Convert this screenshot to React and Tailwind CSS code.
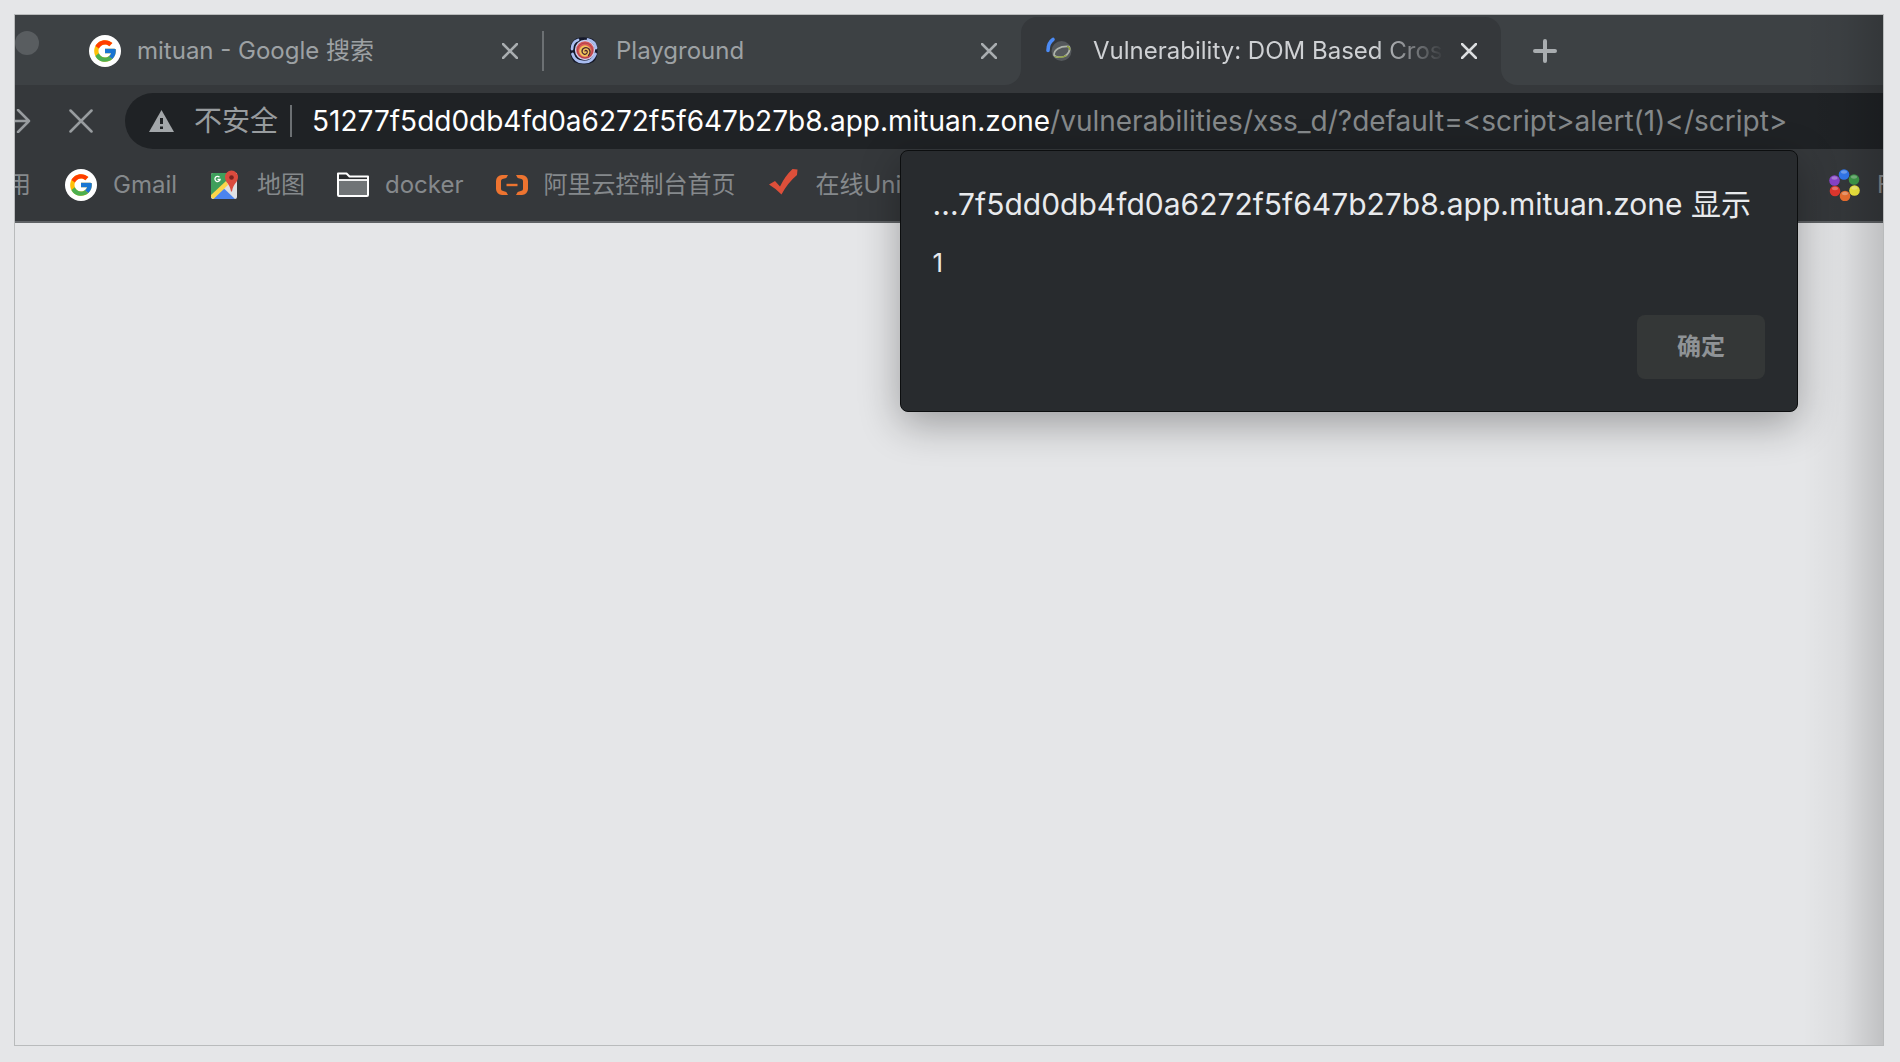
import { FcGoogle } from "react-icons/fc";

function GoogleBadge() {
  return (
    <span className="flex size-8 shrink-0 items-center justify-center rounded-full bg-white">
      <FcGoogle size={26} aria-hidden="true" />
    </span>
  );
}

function Cross({ size, width }) {
  return (
    <svg width={size} height={size} viewBox="0 0 16 16" fill="none" stroke="currentColor" strokeWidth={width} strokeLinecap="round" aria-hidden="true">
      <path d="M1 1 15 15M15 1 1 15" />
    </svg>
  );
}

function SpiralIcon() {
  return (
    <svg className="size-8 shrink-0" viewBox="0 0 32 32" fill="none" aria-hidden="true">
      <path d="M8 3.500Q16 1 25 4 30 9 29.500 17 29 27 22 28.500 14 30.500 6 27 1.500 21 2 14 2.500 7 8 3.500Z" fill="#15192b" />
      <path d="M4 14Q4 7 10 5M4.500 19Q7 27 15 27Q24 28 27.500 19M20 4.500Q27 6 28 13" stroke="#a9bdf0" strokeWidth="2.800" strokeLinecap="round" />
      <circle cx="17" cy="15" r="9.500" fill="#d95a58" stroke="#c9cdf0" strokeWidth="1.300" />
      <circle cx="17" cy="15.500" r="7.500" stroke="#a33a45" strokeWidth="0.800" />
      <circle cx="17" cy="16" r="5.800" fill="#f2c35a" />
      <path d="M17 16c1-1.500 3 0 2 2-1.500 2.300-5 1.300-5-1.700 0-3.500 4.500-5 7-2.300 1.500 2 1.200 4.500-.5 6.500" stroke="#4a2430" strokeWidth="1.300" strokeLinecap="round" />
    </svg>
  );
}

function LoadingIcon() {
  return (
    <svg className="size-8 shrink-0" viewBox="0 0 32 32" fill="none" aria-hidden="true">
      <path d="M3 15.500C3 10.500 5 6.500 8 4.500" stroke="#4c8bf5" strokeWidth="3.600" strokeLinecap="round" />
      <circle cx="16.500" cy="16" r="10" fill="#54585b" />
      <path d="M9 20C9 15 14 11 24 11.500C26 15 23 20 19 21.500C14 22.500 10 22 9 20Z" stroke="#aeb3ab" strokeWidth="1.700" />
      <path d="M9.500 21.500Q16 23.500 21.500 20.500M22 11.500Q25.500 12 24.500 15" stroke="#8fa23c" strokeWidth="1.300" />
    </svg>
  );
}

function MapsIcon() {
  return (
    <svg className="size-8 shrink-0" viewBox="0 0 32 32" fill="none" aria-hidden="true">
      <path d="M4 4h24v24a2 2 0 0 1-2 2H4a2 2 0 0 1-2-2V6a2 2 0 0 1 2-2Z" fill="#dfe1e4" />
      <path d="M4 4h16l-3 10L2 28V6a2 2 0 0 1 2-2Z" fill="#3f9f5b" />
      <path d="M4 30 15 19.500 26 30Z" fill="#4c84ee" />
      <path d="m2 26 15-14 2 4L4.500 30 2 28Z" fill="#fbd54a" />
      <path d="M22.500 1.500a6.500 6.500 0 0 1 6.500 6.600c0 5.500-4.700 6.500-6 14.400h-1c-1.300-7.900-6-8.900-6-14.400a6.500 6.500 0 0 1 6.500-6.600Z" fill="#dc4b3e" />
      <circle cx="22.500" cy="8.500" r="2.300" fill="#7b231f" />
      <path d="M10.500 8.200a2.600 2.600 0 1 0 .6 2.300H8.500" stroke="#fff" strokeWidth="1.300" />
    </svg>
  );
}

function FolderIcon() {
  return (
    <svg className="size-8 shrink-0" viewBox="0 0 32 32" fill="none" aria-hidden="true">
      <path d="M1 26V4.500h8.500l3 3H31V26a1 1 0 0 1-1 1H2a1 1 0 0 1-1-1Z" fill="#2a2c2e" stroke="#fff" strokeWidth="2" strokeLinejoin="round" />
      <path d="M2 11h28v15H2Z" fill="#707476" />
      <path d="M1 11h30" stroke="#fff" strokeWidth="1.800" />
    </svg>
  );
}

function AliyunIcon() {
  return (
    <svg className="size-8 shrink-0" viewBox="0 0 32 32" fill="none" aria-hidden="true">
      <path d="M12 6H6a6 6 0 0 0-6 6v8a6 6 0 0 0 6 6h6l-1.700-3-3.800-1.200A2 2 0 0 1 5 20v-8a2 2 0 0 1 1.500-1.900L10.300 9ZM20 6h6a6 6 0 0 1 6 6v8a6 6 0 0 1-6 6h-6l1.700-3 3.800-1.200A2 2 0 0 0 27 20v-8a2 2 0 0 0-1.500-1.900L21.700 9Z" fill="#ee7430" />
      <path d="M10.500 14.800h11v2.400h-11Z" fill="#ee7430" />
    </svg>
  );
}

function CheckIcon() {
  return (
    <svg className="size-8 shrink-0" viewBox="0 0 32 32" aria-hidden="true">
      <path d="M1 15.500 7 12 12 17.500Q17 7 24.500 0L29.500 .5 29 6Q19.500 14 13.500 25.500Q7 19 1 15.500Z" fill="#dd4f3a" />
    </svg>
  );
}

function BeadsIcon() {
  const beads = [
    [15, 5.500, "#3178ee"],
    [25, 10.500, "#3f9a4a"],
    [25.500, 21.500, "#f3ea3e"],
    [16, 27, "#ec7030"],
    [6, 22, "#e4382f"],
    [5.500, 11.500, "#8a44cc"],
  ];
  return (
    <svg className="size-8 shrink-0" viewBox="0 0 32 32" aria-hidden="true">
      {beads.map(([x, y, color]) => (
        <g key={color}>
          <circle cx={x} cy={y} r="5.300" fill={color} />
          <ellipse cx={x} cy={y - 2.500} rx="3" ry="1.700" fill="#fff" opacity="0.300" />
        </g>
      ))}
    </svg>
  );
}

function Tab({ icon, title, active }) {
  return (
    <div className={active ? "flex h-full min-w-0 flex-1 items-center rounded-t-2xl bg-[#35383b] px-6 text-[#cfd1d4]" : "flex h-full min-w-0 flex-1 items-center px-6 text-[#9da1a4]"}>
      {icon}
      <span className={active ? "ml-4 flex-1 overflow-hidden mask-r-from-80% whitespace-nowrap" : "ml-4 flex-1 overflow-hidden whitespace-nowrap"}>{title}</span>
      <button type="button" aria-label={"关闭 " + title} className={active ? "ml-4 text-[#dcdee0]" : "ml-4 text-[#a9adb0]"}>
        <Cross size={16} width={2.5} />
      </button>
    </div>
  );
}

function Bookmark({ icon, children }) {
  return (
    <a href="#" className="flex shrink-0 items-center gap-4 whitespace-nowrap">
      {icon}
      <span>{children}</span>
    </a>
  );
}

function AlertDialog() {
  return (
    <div role="alertdialog" aria-labelledby="alert-title" aria-describedby="alert-message" className="absolute top-[135px] right-[85px] flex flex-col rounded-lg border border-[#0c0e0f] bg-[#282b2e] p-8 text-[#e8eaed] shadow-[0_12px_40px_rgba(0,0,0,0.32)]">
      <h1 id="alert-title" className="mr-[14px] text-[30px] leading-[42px] whitespace-nowrap">...7f5dd0db4fd0a6272f5f647b27b8.app.mituan.zone 显示</h1>
      <p id="alert-message" className="mt-5 text-[26px] leading-9">1</p>
      <button type="button" className="mt-[34px] flex h-16 w-32 items-center justify-center self-end rounded-lg bg-[#343737] text-2xl font-bold text-[#8f9396]">确定</button>
    </div>
  );
}

export default function App() {
  return (
    <div className="flex min-h-screen bg-[#e5e6e8] pt-[14px] pr-4 pb-4 pl-[14px] font-['Inter','Noto_Sans_CJK_SC',sans-serif]">
      <div className="relative flex min-w-0 flex-1 flex-col overflow-hidden border border-[#b9bbbc]">
        <header className="bg-[#35383b]">
          <div className="flex h-[70px] text-2xl">
            <div className="flex min-w-0 basis-[1006px] items-center rounded-br-2xl bg-[#3d4144] pt-0.5">
              <span className="mb-4 size-6 shrink-0 rounded-full bg-[#595d60]" />
              <div className="ml-[26px] flex h-full min-w-0 flex-1 items-center">
                <Tab icon={<GoogleBadge />} title="mituan - Google 搜索" />
                <span className="h-10 w-0.5 bg-[#6c7073]" />
                <Tab icon={<SpiralIcon />} title="Playground" />
              </div>
            </div>
            <div className="flex min-w-0 basis-[480px] bg-[#3d4144] pt-0.5">
              <Tab active icon={<LoadingIcon />} title="Vulnerability: DOM Based Cross Site Scripting" />
            </div>
            <div className="flex flex-1 items-center rounded-bl-2xl bg-[#3d4144] pt-0.5 pl-8">
              <button type="button" aria-label="新标签页" className="text-[#a9adb0]">
                <svg className="size-6" viewBox="0 0 24 24" stroke="currentColor" strokeWidth="4" strokeLinecap="round" aria-hidden="true">
                  <path d="M12 2v20M2 12h20" />
                </svg>
              </button>
            </div>
          </div>

          <div className="flex items-center pt-2 text-[#989c9f]">
            <button type="button" aria-label="前进" className="flex w-4 justify-end overflow-hidden">
              <svg className="h-6 w-7 shrink-0" viewBox="0 0 28 24" fill="none" stroke="currentColor" strokeWidth="2.500" strokeLinecap="round" strokeLinejoin="round" aria-hidden="true">
                <path d="M2 12h24M15 1l11 11-11 11" />
              </svg>
            </button>
            <button type="button" aria-label="停止加载" className="ml-[38px]">
              <Cross size={24} width={1.7} />
            </button>
            <div className="ml-8 flex h-14 min-w-0 flex-1 items-center rounded-l-full bg-[#1f2225] pl-6 text-[28px]">
              <svg className="h-[22px] w-[25px] shrink-0" viewBox="0 0 25 22" aria-hidden="true">
                <path d="M12.500 0 25 22H0Z" fill="#a3a7aa" />
                <path d="M11 8h3v6h-3ZM11 16.500h3v2.500h-3Z" fill="#1f2225" />
              </svg>
              <button type="button" className="ml-5 shrink-0">不安全</button>
              <span className="ml-3 h-8 w-0.5 shrink-0 bg-[#6c7073]" />
              <label htmlFor="address" className="ml-5 shrink-0 text-white">51277f5dd0db4fd0a6272f5f647b27b8.app.mituan.zone</label>
              <input id="address" type="text" spellCheck="false" defaultValue="/vulnerabilities/xss_d/?default=<script>alert(1)</script>" className="min-w-0 flex-1 bg-transparent text-[#85898b] outline-none" />
            </div>
          </div>

          <nav className="flex h-[74px] items-center justify-between overflow-hidden border-b-2 border-[#5f6265] text-2xl text-[#85898c]">
            <div className="flex min-w-0 flex-1 items-center gap-8 overflow-hidden">
              <a href="#" className="flex w-[18px] shrink-0 justify-end overflow-hidden pr-0.5 whitespace-nowrap">应用</a>
              <Bookmark icon={<GoogleBadge />}>Gmail</Bookmark>
              <Bookmark icon={<MapsIcon />}>地图</Bookmark>
              <Bookmark icon={<FolderIcon />}>docker</Bookmark>
              <Bookmark icon={<AliyunIcon />}>阿里云控制台首页</Bookmark>
              <Bookmark icon={<CheckIcon />}>在线Unicode</Bookmark>
            </div>
            <a href="#" className="flex w-[54px] shrink-0 items-center gap-4 overflow-hidden">
              <BeadsIcon />
              <span>F</span>
            </a>
          </nav>
        </header>
        <main className="flex-1" />
        <div className="pointer-events-none absolute inset-y-0 right-0 w-20 bg-linear-to-r from-transparent via-black/4 to-black/16" />
        <AlertDialog />
      </div>
    </div>
  );
}
